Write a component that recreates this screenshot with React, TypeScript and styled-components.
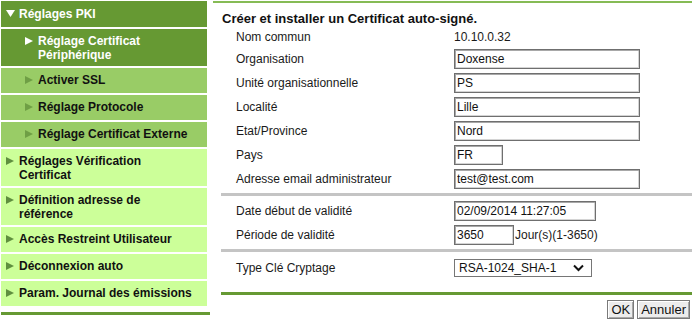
import styled, { createGlobalStyle } from 'styled-components'

const GlobalStyle = createGlobalStyle`
    html, body {
        margin: 0;
        padding: 0;
        background: #ffffff;
    }
    body {
        font-family: "Liberation Sans", Arial, sans-serif;
        font-size: 12px;
        color: #1a1a1a;
    }
`

type Tone = 'dark' | 'mid' | 'light'

const toneBg: Record<Tone, string> = {
    dark: '#669933',
    mid: '#99cc66',
    light: '#ccff99',
}

const toneArrow: Record<Tone, string> = {
    dark: '#ffffff',
    mid: '#6f9f45',
    light: '#5f8f3f',
}

const Page = styled.div`
    display: flex;
    align-items: flex-start;
    padding: 1px 0 0 1px;
`

const Sidebar = styled.nav`
    width: 206px;
    display: flex;
    flex-direction: column;
    gap: 2px;
`

const NavItem = styled.div<{ $tone: Tone; $sub?: boolean; $head?: boolean; $double?: boolean }>`
    display: grid;
    grid-template-columns: 13px 1fr;
    align-items: start;
    padding: ${(p) => (p.$head ? '6px 4px 6px' : p.$double ? '5px 4px 4px' : '5px 4px 6px')};
    padding-left: ${(p) => (p.$sub ? '24px' : '5px')};
    background: ${(p) => toneBg[p.$tone]};
    color: ${(p) => (p.$tone === 'dark' ? '#ffffff' : '#111111')};
    font-weight: bold;
    font-size: 12px;
    line-height: 14px;
`

const Arrow = styled.svg`
    margin-top: 3px;
`

const SidebarFoot = styled.div`
    width: 209px;
    height: 3px;
    margin-top: 6px;
    background: #669933;
`

const Content = styled.main`
    flex: 1;
    margin-left: 3px;
    border-top: 2px solid #86bb55;
    padding-left: 8px;
`

const Title = styled.h1`
    margin: 8px 0 0 1px;
    font-size: 13px;
    line-height: 16px;
    font-weight: bold;
    color: #111;
`

const Row = styled.div<{ $h?: number }>`
    display: grid;
    grid-template-columns: 233px auto;
    align-items: center;
    height: ${(p) => p.$h ?? 24}px;
`

const Label = styled.span`
    padding-left: 15px;
    line-height: 14px;
`

const Field = styled.div`
    display: flex;
    align-items: center;
    gap: 1px;
`

const TextInput = styled.input<{ $w: number }>`
    box-sizing: border-box;
    width: ${(p) => p.$w}px;
    height: 20px;
    margin: 0;
    padding: 0 2px;
    border: 1px solid #6f6f6f;
    box-shadow: inset 1px 1px 0 #a8a8a8, inset -1px -1px 0 #d4d4d4;
    font-family: "Liberation Sans", Arial, sans-serif;
    font-size: 12px;
    color: #111;
    background: #fff;
    outline: none;
`

const Separator = styled.div`
    height: 3px;
    margin: 2px 0 3px;
    background: #c4c4c4;
`

const SelectBox = styled.div`
    box-sizing: border-box;
    width: 138px;
    height: 18px;
    display: flex;
    align-items: center;
    justify-content: space-between;
    padding: 0 7px 0 4px;
    border: 1px solid #767676;
    background: #fff;
    font-size: 12px;
    color: #111;
`

const GreenBar = styled.div`
    height: 3px;
    margin-top: 11px;
    background: #669933;
`

const Actions = styled.div`
    display: flex;
    justify-content: flex-end;
    gap: 3px;
    padding: 5px 2px 0 0;
`

const Button = styled.button`
    height: 19px;
    padding: 0 3px;
    border: 1px solid #7a7a7a;
    box-shadow: inset 1px 1px 0 #ffffff, inset -1px -1px 0 #a8a8a8;
    background: #ececec;
    font-family: "Liberation Sans", Arial, sans-serif;
    font-size: 13px;
    line-height: 15px;
    color: #111;
`

function RightArrow({ color }: { color: string }) {
    return (
        <Arrow width="8" height="8" viewBox="0 0 8 8">
            <polygon points="0,0 8,4 0,8" fill={color} />
        </Arrow>
    )
}

function DownArrow() {
    return (
        <Arrow width="9" height="8" viewBox="0 0 9 8">
            <polygon points="0,0 9,0 4.5,7" fill="#ffffff" />
        </Arrow>
    )
}

const menu: { label: string[]; tone: Tone; sub?: boolean }[] = [
    { label: ['Réglage Certificat', 'Périphérique'], tone: 'dark', sub: true },
    { label: ['Activer SSL'], tone: 'mid', sub: true },
    { label: ['Réglage Protocole'], tone: 'mid', sub: true },
    { label: ['Réglage Certificat Externe'], tone: 'mid', sub: true },
    { label: ['Réglages Vérification', 'Certificat'], tone: 'light' },
    { label: ['Définition adresse de', 'référence'], tone: 'light' },
    { label: ['Accès Restreint Utilisateur'], tone: 'light' },
    { label: ['Déconnexion auto'], tone: 'light' },
    { label: ['Param. Journal des émissions'], tone: 'light' },
]

const identity: { label: string; value: string; w: number }[] = [
    { label: 'Organisation', value: 'Doxense', w: 186 },
    { label: 'Unité organisationnelle', value: 'PS', w: 186 },
    { label: 'Localité', value: 'Lille', w: 186 },
    { label: 'Etat/Province', value: 'Nord', w: 186 },
    { label: 'Pays', value: 'FR', w: 49 },
    { label: 'Adresse email administrateur', value: 'test@test.com', w: 186 },
]

export default function App() {
    return (
        <>
            <GlobalStyle />
            <Page>
                <div>
                    <Sidebar>
                        <NavItem $tone="dark" $head>
                            <DownArrow />
                            <span>Réglages PKI</span>
                        </NavItem>
                        {menu.map((item) => (
                            <NavItem
                                key={item.label.join(' ')}
                                $tone={item.tone}
                                $sub={item.sub}
                                $double={item.label.length > 1}
                            >
                                <RightArrow color={toneArrow[item.tone]} />
                                <span>
                                    {item.label.map((line, i) => (
                                        <span key={line}>
                                            {i > 0 && <br />}
                                            {line}
                                        </span>
                                    ))}
                                </span>
                            </NavItem>
                        ))}
                    </Sidebar>
                    <SidebarFoot />
                </div>
                <Content>
                    <Title>Créer et installer un Certificat auto-signé.</Title>
                    <Row $h={20}>
                        <Label>Nom commun</Label>
                        <span>10.10.0.32</span>
                    </Row>
                    {identity.map((f) => (
                        <Row key={f.label}>
                            <Label>{f.label}</Label>
                            <Field>
                                <TextInput $w={f.w} defaultValue={f.value} />
                            </Field>
                        </Row>
                    ))}
                    <Separator />
                    <Row>
                        <Label>Date début de validité</Label>
                        <Field>
                            <TextInput $w={142} defaultValue="02/09/2014 11:27:05" />
                        </Field>
                    </Row>
                    <Row>
                        <Label>Période de validité</Label>
                        <Field>
                            <TextInput $w={60} defaultValue="3650" />
                            <span>Jour(s)(1-3650)</span>
                        </Field>
                    </Row>
                    <Separator />
                    <Row $h={26}>
                        <Label>Type Clé Cryptage</Label>
                        <Field>
                            <SelectBox>
                                <span>RSA-1024_SHA-1</span>
                                <svg width="11" height="8" viewBox="0 0 11 8">
                                    <polyline
                                        points="1,1.5 5.5,6 10,1.5"
                                        fill="none"
                                        stroke="#111"
                                        strokeWidth="2"
                                    />
                                </svg>
                            </SelectBox>
                        </Field>
                    </Row>
                    <GreenBar />
                    <Actions>
                        <Button>OK</Button>
                        <Button>Annuler</Button>
                    </Actions>
                </Content>
            </Page>
        </>
    )
}
